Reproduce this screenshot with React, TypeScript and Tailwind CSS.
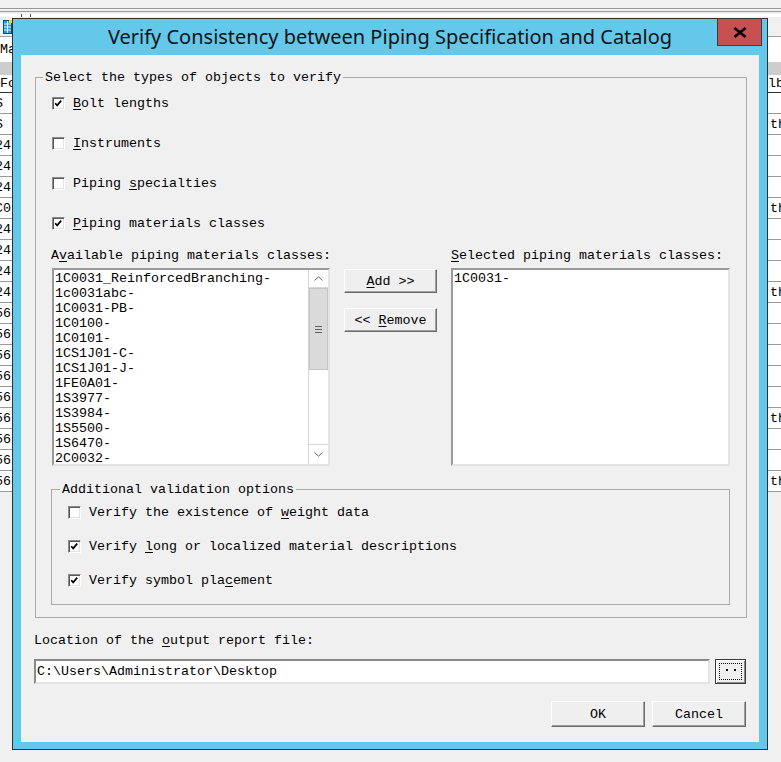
import type { ReactNode } from "react";

const leftCells = ["S", "S", "24", "24", "24", "C0", "24", "24", "24", "24", "56", "56", "56", "56", "56", "56", "56", "56", "56"];
const rightCells = ["", "th", "", "", "", "th", "", "", "", "th", "", "", "", "", "", "th", "", "", "th"];

const available = [
  "1C0031_ReinforcedBranching-",
  "1c0031abc-",
  "1C0031-PB-",
  "1C0100-",
  "1C0101-",
  "1CS1J01-C-",
  "1CS1J01-J-",
  "1FE0A01-",
  "1S3977-",
  "1S3984-",
  "1S5500-",
  "1S6470-",
  "2C0032-",
];

function Key({ children }: { children: ReactNode }) {
  return <span className="underline underline-offset-[2px]">{children}</span>;
}

function Check({ checked, children }: { checked?: boolean; children: ReactNode }) {
  return (
    <div className="flex items-center h-[16px]">
      <div className="w-[13px] h-[13px] bg-white border border-t-[#8a8a8a] border-l-[#8a8a8a] border-b-white border-r-white shadow-[inset_1px_1px_0_#5a5a5a,inset_-1px_-1px_0_#e3e3e3]">
        {checked && (
          <svg width="11" height="11" viewBox="0 0 11 11">
            <path d="M2.2 5.2 L4.2 7.4 L8.2 2.6" fill="none" stroke="#000" strokeWidth="1.7" />
          </svg>
        )}
      </div>
      <span className="ml-[8px] whitespace-pre">{children}</span>
    </div>
  );
}

function Button({ children, className }: { children: ReactNode; className: string }) {
  return (
    <div
      className={`flex items-center justify-center bg-[#efefef] border border-t-white border-l-white border-b-[#6a6a6a] border-r-[#6a6a6a] shadow-[inset_-1px_-1px_0_#a0a0a0] whitespace-pre ${className}`}
    >
      {children}
    </div>
  );
}

function Listbox({ items, scroll }: { items: string[]; scroll?: boolean }) {
  return (
    <div className="flex h-[198px] bg-white border-2 border-t-[#9a9a9a] border-l-[#9a9a9a] border-b-[#e3e3e3] border-r-[#e3e3e3] overflow-hidden">
      <div className="flex-1 pl-[1px] pt-[1px]">
        {items.map((it) => (
          <div key={it} className="h-[15px] whitespace-pre">
            {it}
          </div>
        ))}
      </div>
      {scroll && (
        <div className="w-[20px] flex flex-col border-l border-[#d6d6d6]">
          <div className="h-[18px] flex items-center justify-center border-b border-[#d6d6d6]">
            <svg width="9" height="5" viewBox="0 0 9 5">
              <path d="M0.5 4.5 L4.5 0.8 L8.5 4.5" fill="none" stroke="#606060" strokeWidth="1" />
            </svg>
          </div>
          <div className="h-[82px] bg-[#dadada] border border-[#c4c4c4] flex flex-col items-center justify-center gap-[2px]">
            <div className="w-[7px] h-[1px] bg-[#606060]" />
            <div className="w-[7px] h-[1px] bg-[#606060]" />
            <div className="w-[7px] h-[1px] bg-[#606060]" />
          </div>
          <div className="flex-1" />
          <div className="h-[20px] flex items-center justify-center border-t border-[#d6d6d6]">
            <svg width="9" height="5" viewBox="0 0 9 5">
              <path d="M0.5 0.5 L4.5 4.2 L8.5 0.5" fill="none" stroke="#606060" strokeWidth="1" />
            </svg>
          </div>
        </div>
      )}
    </div>
  );
}

export default function App() {
  return (
    <div className="relative w-[781px] h-[762px] overflow-hidden bg-[#f0f0f0] font-['Liberation_Mono',monospace] text-[13.34px] leading-[15px] text-black">
      {/* host application behind the dialog */}
      <div className="h-[8px]" />
      <div className="h-[4px] border-t border-b border-[#9a9a9a]" />
      <div className="h-[3px] mt-[2px] flex bg-white">
        <div className="ml-[21px] w-[1px] bg-[#555]" />
        <div className="ml-[8px] w-[1px] bg-[#555]" />
      </div>
      <div className="h-[19px] flex items-center pl-[3px]">
        <svg width="9" height="14" viewBox="0 0 9 14">
          <rect x="0.5" y="0.5" width="8" height="13" fill="#1aa0d8" stroke="#0a4f7a" />
          <path d="M1 4 H8 M1 7 H8 M1 10 H8 M4.5 1 V13" stroke="#e8f8ff" strokeWidth="1" />
          <rect x="6" y="0" width="3" height="3" fill="#f2d23a" />
        </svg>
      </div>
      <div className="h-[26px] flex items-center bg-white border-t border-[#a0a0a0]">
        <span className="whitespace-pre">Material</span>
      </div>
      <div className="h-[13px] bg-[#cdcdcd]" />
      <div className="h-[18px] flex items-center bg-white border-b border-[#303030]">
        <div className="w-[12px] whitespace-pre">Format</div>
        <div className="flex-1" />
        <div className="w-[13px] whitespace-pre">lb</div>
      </div>
      {leftCells.map((l, i) => (
        <div key={i} className="h-[21px] flex items-center bg-white border-b border-[#9a9a9a]">
          <div className="w-[12px] whitespace-pre">
            <span className="block -ml-[5px]">{l}</span>
          </div>
          <div className="flex-1" />
          <div className="w-[13px] pl-[2px] whitespace-pre">{rightCells[i]}</div>
        </div>
      ))}

      {/* dialog window */}
      <div className="absolute left-[12px] top-[18px] w-[756px] h-[732px] flex flex-col border border-[#2f2f2f] bg-[#63c8ea]">
        <div className="h-[36px] flex items-center justify-center font-['Noto_Sans',sans-serif] text-[20px] leading-none text-[#111]">
          Verify Consistency between Piping Specification and Catalog
        </div>
        <div className="absolute left-[704px] -top-[1px] w-[45px] h-[28px] bg-[#c75050] border border-[#3c3c3c] flex items-center justify-center">
          <svg width="14" height="11" viewBox="0 0 14 11">
            <path d="M1.5 1 L12.5 10 M12.5 1 L1.5 10" stroke="#000" strokeWidth="2.6" />
          </svg>
        </div>

        <div className="flex-1 px-[8px] pb-[7px]">
          <div className="h-full bg-[#f0f0f0] flex flex-col">
            <fieldset className="mt-[15px] ml-[14px] w-[712px] border border-[#a9a9a9]">
              <legend className="ml-[7px] px-[2px] whitespace-pre">Select the types of objects to verify</legend>
              <div className="pl-[16px] pr-[15px] pb-[12px]">
                <div className="flex flex-col gap-[24px] pt-[10px]">
                  <Check checked>
                    <Key>B</Key>olt lengths
                  </Check>
                  <Check>
                    <Key>I</Key>nstruments
                  </Check>
                  <Check>
                    Piping <Key>s</Key>pecialties
                  </Check>
                  <Check checked>
                    <Key>P</Key>iping materials classes
                  </Check>
                </div>

                <div className="flex mt-[17px]">
                  <div className="w-[278px]">
                    <div className="h-[15px] -ml-[1px] whitespace-pre">
                      A<Key>v</Key>ailable piping materials classes:
                    </div>
                    <div className="mt-[5px]">
                      <Listbox items={available} scroll />
                    </div>
                  </div>
                  <div className="ml-[14px] w-[93px] pt-[21px] flex flex-col gap-[15px]">
                    <Button className="h-[24px]">
                      <span>
                        <Key>A</Key>dd &gt;&gt;
                      </span>
                    </Button>
                    <Button className="h-[24px]">
                      <span>
                        &lt;&lt; <Key>R</Key>emove
                      </span>
                    </Button>
                  </div>
                  <div className="ml-[14px] w-[279px]">
                    <div className="h-[15px] whitespace-pre">
                      <Key>S</Key>elected piping materials classes:
                    </div>
                    <div className="mt-[5px]">
                      <Listbox items={["1C0031-"]} />
                    </div>
                  </div>
                </div>

                <fieldset className="mt-[16px] -ml-[1px] w-[679px] border border-[#a9a9a9]">
                  <legend className="ml-[8px] px-[2px] whitespace-pre">Additional validation options</legend>
                  <div className="flex flex-col gap-[18px] pt-[7px] pl-[16px] pb-[16px]">
                    <Check>
                      Verify the existence of <Key>w</Key>eight data
                    </Check>
                    <Check checked>
                      Verify <Key>l</Key>ong or localized material descriptions
                    </Check>
                    <Check checked>
                      Verify symbol pla<Key>c</Key>ement
                    </Check>
                  </div>
                </fieldset>
              </div>
            </fieldset>

            <div className="px-[13px] mt-[15px]">
              <div className="h-[15px] whitespace-pre">
                Location of the <Key>o</Key>utput report file:
              </div>
              <div className="flex mt-[11px]">
                <div className="w-[676px] h-[25px] flex items-center pl-[1px] bg-white border-2 border-t-[#8a8a8a] border-l-[#8a8a8a] border-b-[#e3e3e3] border-r-[#e3e3e3] whitespace-pre">
                  C:\Users\Administrator\Desktop
                </div>
                <div className="ml-[5px] w-[31px] h-[25px] p-[3px] bg-[#efefef] border border-[#3a3a3a] shadow-[inset_1px_1px_0_#ffffff,inset_-1px_-1px_0_#8a8a8a]">
                  <div className="h-full border border-dotted border-black flex items-center justify-center gap-[6px] pb-[3px]">
                    <div className="w-[2px] h-[2px] bg-black" />
                    <div className="w-[2px] h-[2px] bg-black" />
                  </div>
                </div>
              </div>
              <div className="flex justify-end gap-[7px] mt-[17px]">
                <Button className="w-[94px] h-[26px]">OK</Button>
                <Button className="w-[94px] h-[26px]">Cancel</Button>
              </div>
            </div>
          </div>
        </div>
      </div>
    </div>
  );
}
